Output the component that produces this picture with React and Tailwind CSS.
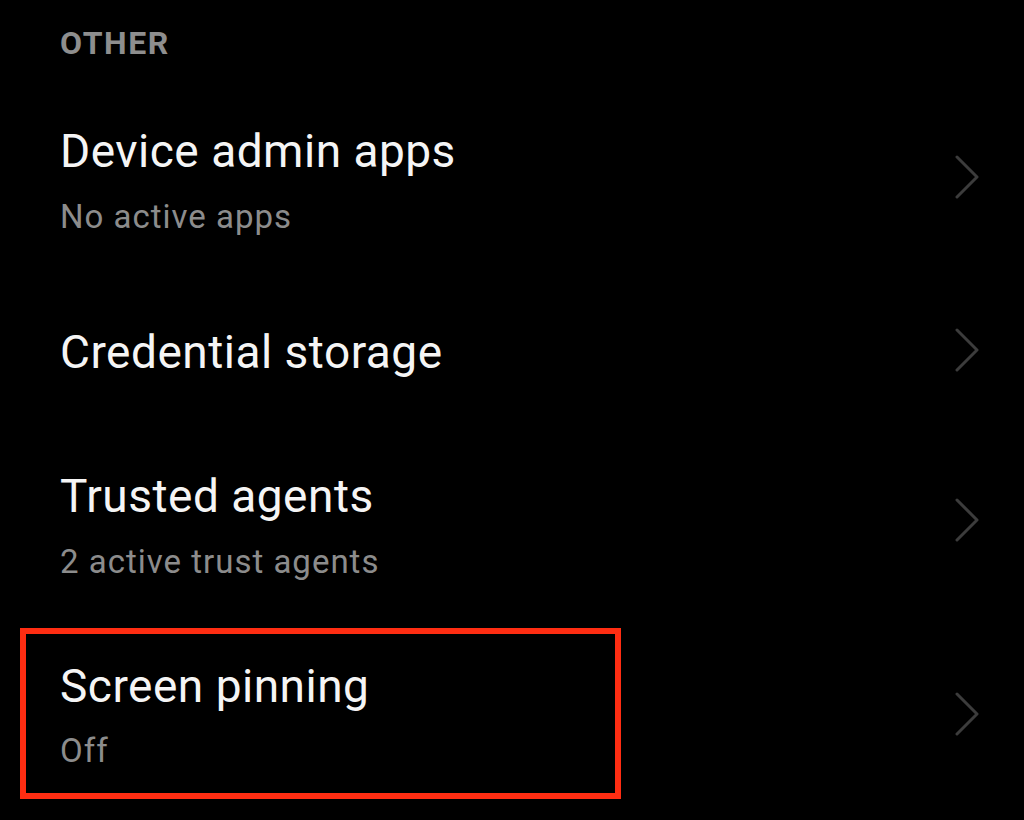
import React from 'react';

function Chevron() {
  return (
    <svg width="26" height="44" viewBox="0 0 26 44" className="self-center" fill="none">
      <polyline points="3,2 23,22 3,42" stroke="#3c3c3c" strokeWidth="3" strokeLinecap="round" strokeLinejoin="round" />
    </svg>
  );
}

function Row({ title, subtitle, rowClass, textClass }) {
  return (
    <div className={`flex justify-between pl-[60px] pr-[44px] ${rowClass}`}>
      <div className={textClass}>
        <div className="text-[46px] leading-[52px] tracking-[0.5px] text-[#f5f5f5]">{title}</div>
        {subtitle && (
          <div className="mt-[20px] text-[33px] leading-[40px] tracking-[1px] text-[#8c8c8c]">{subtitle}</div>
        )}
      </div>
      <Chevron />
    </div>
  );
}

export default function App() {
  return (
    <div className="w-[1024px] h-[820px] overflow-hidden bg-black" style={{ fontFamily: 'Roboto, "Noto Sans", sans-serif' }}>
      <div className="h-[90px] pt-[25px] pl-[60px]">
        <div className="text-[32px] leading-[36px] font-bold tracking-[1.6px] text-[#8e8e8e]">OTHER</div>
      </div>
      <Row title="Device admin apps" subtitle="No active apps" rowClass="h-[174px]" textClass="pt-[35px]" />
      <Row title="Credential storage" rowClass="h-[172px]" textClass="pt-[62px]" />
      <Row title="Trusted agents" subtitle="2 active trust agents" rowClass="h-[168px]" textClass="pt-[34px]" />
      <div className="flex items-center justify-between pl-[20px] pr-[44px] pt-[24px]">
        <div className="w-[601px] h-[171px] border-[6px] border-[#ff2d12] pl-[34px] pt-[26px]">
          <div className="text-[46px] leading-[52px] tracking-[0.5px] text-[#f5f5f5]">Screen pinning</div>
          <div className="mt-[19px] text-[33px] leading-[40px] tracking-[1px] text-[#8c8c8c]">Off</div>
        </div>
        <Chevron />
      </div>
    </div>
  );
}
